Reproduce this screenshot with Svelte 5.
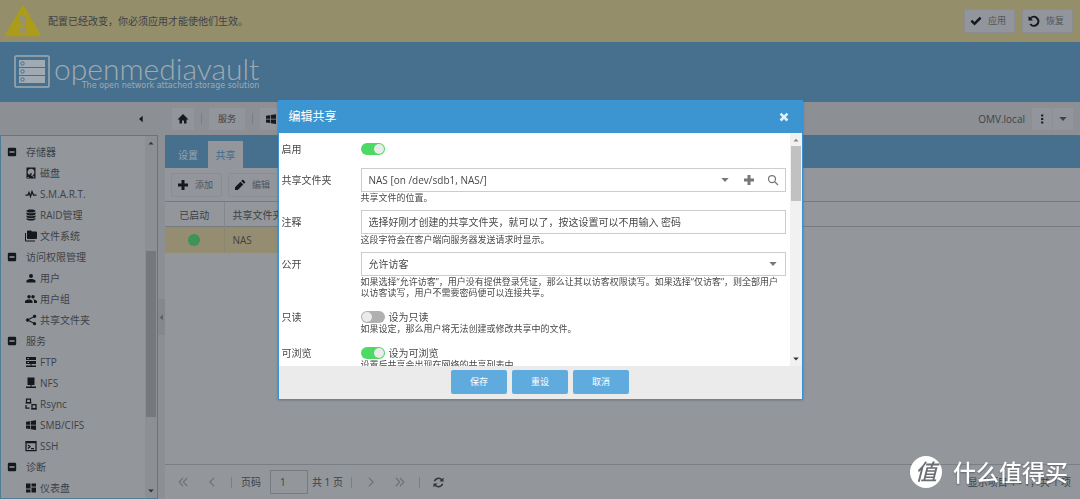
<script>
    let enabled = $state(true);
    let readOnly = $state(false);
    let browseable = $state(true);
    let comment = $state('选择好刚才创建的共享文件夹，就可以了，按这设置可以不用输入 密码');
    let page = $state(1);

    // f = filled shapes, s = stroked lines, all on a 24x24 grid
    const icons = {
        minus: { f: 'M5 2h14a3 3 0 0 1 3 3v14a3 3 0 0 1-3 3H5a3 3 0 0 1-3-3V5a3 3 0 0 1 3-3zM6 10v4h12v-4z' },
        disk: { f: 'M3 1h18v22H3zM12 3.500a7 7 0 0 0-4 12.700l4-4.200 2 1.500-2.500 4A7 7 0 0 0 12 3.500zM5 20v1.500h3V20zM14 17l3 4h2l-3.500-5z' },
        pulse: { s: 'M1 14h5l2-5 3 8 3-10 3 7h6' },
        database: { f: 'M12 1c5.500 0 9 1.300 9 3s-3.500 3-9 3-9-1.300-9-3 3.500-3 9-3zM3 6.500c2 1.500 5 2 9 2s7-.5 9-2V10c0 1.700-3.500 3-9 3s-9-1.300-9-3zM3 12.300c2 1.500 5 2 9 2s7-.5 9-2v3c0 1.700-3.500 3-9 3s-9-1.300-9-3zM3 17.800c2 1.500 5 2 9 2s7-.5 9-2V20c0 1.700-3.500 3-9 3s-9-1.300-9-3z' },
        folders: { f: 'M22 3h-8l-2-2H6a2 2 0 0 0-2 2v13a2 2 0 0 0 2 2h16a2 2 0 0 0 2-2V5a2 2 0 0 0-2-2M2 6H0v15a2 2 0 0 0 2 2h18v-2H2z' },
        user: { f: 'M12 12a4 4 0 1 0 0-8 4 4 0 0 0 0 8zm0 2c-2.700 0-9 1.300-9 4v3h18v-3c0-2.700-6.300-4-9-4z' },
        users: { f: 'M16 11a3.500 3.500 0 1 0 0-7 3.500 3.500 0 0 0 0 7zm-8 0a3.500 3.500 0 1 0 0-7 3.500 3.500 0 0 0 0 7zm0 2c-2.300 0-8 1.200-8 3.500V20h15v-3.500C15 14.200 10.300 13 8 13zm8 0c1.500 1 2 2 2 3.500V20h6v-3.500c0-2.300-5.700-3.500-8-3.500z' },
        share: { f: 'M19 16c-.8 0-1.600.3-2.200.8l-8.300-4.200V11.400L16.800 7.200A3.300 3.300 0 1 0 15.700 5v.5L7.500 9.700a3.300 3.300 0 1 0 0 4.600l8.200 4.200v.5A3.300 3.300 0 1 0 19 16z' },
        ftp: { f: 'M2 2h20v6H2zM2 10h20v6H2zM11 16h2v3h9v3H2v-3h9zM5 4v2h3V4zM5 12v2h3v-2z' },
        nfs: { f: 'M5 1h14v15H5zM11 16h2v3h9v3H2v-3h9z' },
        rsync: { f: 'M1 9h12v2H1zM12 21h12v2H12z', s: 'M3 2h8v7H3zM14 13h8v8h-8zM2 14v6h7' },
        windows: { f: 'M2 5.500l8-1.200v7.200H2zM11.500 4L22 2.500v9H11.500zM2 12.800h8V20l-8-1.200zM11.500 12.800H22v9L11.500 20.300z' },
        ssh: { s: 'M2 3h20v18H2zM2 5h20M6 10l4 3-4 4M12 17h6' },
        dashboard: { f: 'M2 13h9V3H2zM2 21h9v-6H2zM13 21h9V11h-9zM13 3v6h9V3z' },
        home: { f: 'M10 21v-6h4v6h5v-8h4L12 2 1 13h4v8z' },
        plus: { f: 'M9 2h6v7h7v6h-7v7H9v-7H2V9h7z' },
        pencil: { f: 'M2 16.500V22h5.500L18.500 11 13 5.500zM22 7.500c.7-.7.7-1.500 0-2.200L18.700 2c-.7-.7-1.500-.7-2.200 0L14.500 4 20 9.500z' },
        check: { f: 'M1 13l3.500-3.500L9 14 19.500 3.500 23 7 9 21z' },
        undo: { f: 'M1 2v9h9L6.600 7.600A7 7 0 1 1 6 17l-3 2.200A11 11 0 1 0 4 5z' },
        dots: { f: 'M10 1h5v5h-5zM10 9.500h5v5h-5zM10 18h5v5h-5z' },
        caret: { f: 'M1 6h22L12 18z' },
        up: { f: 'M2 18h20L12 7z' },
        left: { f: 'M17 2v20L6 12z' },
        search: { s: 'M10 3a7 7 0 1 0 0 14 7 7 0 0 0 0-14zM15 15L22 22' },
        close: { f: 'M6 1.500l6 6 6-6L22.500 6l-6 6 6 6-4.500 4.500-6-6-6 6L1.500 18l6-6-6-6z' },
        first: { s: 'M12 2L3 12l9 10M22 2l-9 10 9 10' },
        prev: { s: 'M17 2L7 12l10 10' },
        next: { s: 'M7 2l10 10L7 22' },
        last: { s: 'M2 2l9 10-9 10M12 2l9 10-9 10' },
        refresh: { f: 'M23 1v9h-9l3.300-3.300A7.500 7.500 0 0 0 5 9.500H1.500A11 11 0 0 1 19.800 4.200zM1 23v-9h9l-3.300 3.300A7.500 7.500 0 0 0 19 14.500h3.500A11 11 0 0 1 4.200 19.800z' }
    };

    const menu = [
        { title: '存储器', items: [['disk', '磁盘'], ['pulse', 'S.M.A.R.T.'], ['database', 'RAID管理'], ['folders', '文件系统']] },
        { title: '访问权限管理', items: [['user', '用户'], ['users', '用户组'], ['share', '共享文件夹']] },
        { title: '服务', items: [['ftp', 'FTP'], ['nfs', 'NFS'], ['rsync', 'Rsync'], ['windows', 'SMB/CIFS'], ['ssh', 'SSH']] },
        { title: '诊断', items: [['dashboard', '仪表盘']] }
    ];
</script>

{#snippet icon(name)}
    <svg class="icon {name}" viewBox="0 0 24 24" aria-hidden="true">
        {#if icons[name].f}<path d={icons[name].f} fill="currentColor" fill-rule="evenodd" />{/if}
        {#if icons[name].s}<path d={icons[name].s} fill="none" stroke="currentColor" stroke-width="2.500" />{/if}
    </svg>
{/snippet}

<div class="app">
    <div class="notice">
        <svg class="warning" viewBox="0 0 34 32" aria-hidden="true">
            <path d="M17 3L32 29H2z" fill="#ab9c1c" stroke="#ab9c1c" stroke-width="3" stroke-linejoin="round" />
            <path d="M14 11h6l-1 9h-4zM14 22h6v5h-6z" fill="#979274" />
        </svg>
        <span class="message">配置已经改变，你必须应用才能使他们生效。</span>
        <button class="tool">{@render icon('check')}应用</button>
        <button class="tool">{@render icon('undo')}恢复</button>
    </div>

    <header>
        <svg class="logo" viewBox="0 0 36 34" aria-hidden="true">
            <rect x="1" y="1" width="34" height="31" rx="1" fill="none" stroke="#a0aab3" stroke-width="1.500" />
            <path d="M5 5h26v7H5zM5 13h26v7H5zM5 21h26v7H5z" fill="#a0aab3" />
            <g fill="none" stroke="#46708e">
                <circle cx="8.500" cy="8.500" r="1.700" /><circle cx="8.500" cy="16.500" r="1.700" /><circle cx="8.500" cy="24.500" r="1.700" />
                <path d="M5 12.500h26M5 20.500h26" />
            </g>
        </svg>
        <div class="brand">
            <span class="name">openmediavault</span>
            <span class="tagline">The open network attached storage solution</span>
        </div>
    </header>

    <nav class="crumbs">
        <button class="collapse" aria-label="折叠">{@render icon('left')}</button>
        <button class="crumb" aria-label="主页">{@render icon('home')}</button>
        <i></i>
        <button class="crumb text">服务</button>
        <i></i>
        <button class="crumb" aria-label="SMB/CIFS">{@render icon('windows')}</button>
        <span class="host">OMV.local</span>
        <div class="pair">
            <button aria-label="菜单">{@render icon('dots')}</button>
            <button aria-label="更多">{@render icon('caret')}</button>
        </div>
    </nav>

    <div class="body">
        <aside>
            <ul class="tree">
                {#each menu as group}
                    <li>
                        <button class="group">{@render icon('minus')}{group.title}</button>
                        <ul>
                            {#each group.items as [name, label]}
                                <li><a href="#top">{@render icon(name)}{label}</a></li>
                            {/each}
                        </ul>
                    </li>
                {/each}
            </ul>
            <div class="scroll dim">
                {@render icon('up')}
                <div class="track side"><div class="thumb"></div></div>
                {@render icon('caret')}
            </div>
        </aside>
        <div class="splitter"><span>{@render icon('left')}</span></div>

        <main>
            <div class="tabs">
                <button>设置</button>
                <button class="active">共享</button>
            </div>
            <div class="toolbar">
                <button class="tool">{@render icon('plus')}添加</button>
                <button class="tool">{@render icon('pencil')}编辑</button>
            </div>
            <div class="grid">
                <table>
                    <thead>
                        <tr><th class="state">已启动</th><th>共享文件夹</th><th></th></tr>
                    </thead>
                    <tbody>
                        <tr><td class="state"><span class="dot"></span></td><td>NAS</td><td></td></tr>
                    </tbody>
                </table>
            </div>
            <div class="paging">
                <button aria-label="首页">{@render icon('first')}</button>
                <button aria-label="上一页">{@render icon('prev')}</button>
                <i></i>
                <label for="page">页码</label>
                <input id="page" bind:value={page} />
                <span class="count">共 1 页</span>
                <i></i>
                <button aria-label="下一页">{@render icon('next')}</button>
                <button aria-label="末页">{@render icon('last')}</button>
                <i></i>
                <button aria-label="刷新">{@render icon('refresh')}</button>
                <span class="summary">显示项目 1 - 1，共 1 项</span>
            </div>
        </main>
    </div>
</div>

<div class="overlay">
    <div class="window" role="dialog" aria-labelledby="title">
        <div class="title">
            <h1 id="title">编辑共享</h1>
            <button aria-label="关闭">{@render icon('close')}</button>
        </div>
        <div class="content">
            <form>
                <div class="row">
                    <label for="enable">启用</label>
                    <div class="field">
                        <div class="switch"><input id="enable" type="checkbox" bind:checked={enabled} /></div>
                    </div>
                </div>
                <div class="row">
                    <label for="folder">共享文件夹</label>
                    <div class="field">
                        <div class="box">
                            <select id="folder"><option>NAS [on /dev/sdb1, NAS/]</option></select>
                            <span class="trigger">{@render icon('caret')}</span>
                            <button type="button" class="trigger" aria-label="添加">{@render icon('plus')}</button>
                            <button type="button" class="trigger" aria-label="搜索">{@render icon('search')}</button>
                        </div>
                        <p>共享文件的位置。</p>
                    </div>
                </div>
                <div class="row">
                    <label for="comment">注释</label>
                    <div class="field">
                        <div class="box"><input id="comment" type="text" bind:value={comment} /></div>
                        <p>这段字符会在客户端向服务器发送请求时显示。</p>
                    </div>
                </div>
                <div class="row">
                    <label for="public">公开</label>
                    <div class="field">
                        <div class="box">
                            <select id="public"><option>允许访客</option><option>仅访客</option></select>
                            <span class="trigger">{@render icon('caret')}</span>
                        </div>
                        <p>如果选择“允许访客”，用户没有提供登录凭证，那么让其以访客权限读写。如果选择“仅访客”，则全部用户以访客读写，用户不需要密码便可以连接共享。</p>
                    </div>
                </div>
                <div class="row">
                    <label for="readonly">只读</label>
                    <div class="field">
                        <label class="switch"><input id="readonly" type="checkbox" bind:checked={readOnly} />设为只读</label>
                        <p class="tight">如果设定，那么用户将无法创建或修改共享中的文件。</p>
                    </div>
                </div>
                <div class="row">
                    <label for="browse">可浏览</label>
                    <div class="field">
                        <label class="switch"><input id="browse" type="checkbox" bind:checked={browseable} />设为可浏览</label>
                        <p class="tight">设置后共享会出现在网络的共享列表中。</p>
                    </div>
                </div>
            </form>
            <div class="scroll">
                {@render icon('up')}
                <div class="track"><div class="thumb"></div></div>
                {@render icon('caret')}
            </div>
        </div>
        <div class="actions">
            <button>保存</button>
            <button>重设</button>
            <button>取消</button>
        </div>
    </div>
</div>

<div class="watermark"><span class="badge">值</span>什么值得买</div>

<style>
:global(body) {
    font: 10px/20px "Open Sans", "Noto Sans CJK SC", sans-serif;
    color: #3d4147;
    background: #93979c;
}

* {
    box-sizing: border-box;
}

button, input, select {
    font: inherit;
    color: inherit;
    border: 0;
    padding: 0;
    margin: 0;
    background: none;
}

button {
    display: flex;
    align-items: center;
    justify-content: center;
    cursor: pointer;
}

ul {
    list-style: none;
    margin: 0;
    padding: 0;
}

.icon {
    width: 12px;
    height: 12px;
    flex: none;
    color: #15181d;
}

.app {
    height: 100vh;
    display: flex;
    flex-direction: column;
    overflow: hidden;
}

.notice {
    height: 42px;
    flex: none;
    display: flex;
    align-items: center;
    gap: 7px;
    padding: 0 7px 0 5px;
    background: #958e6a;
}

.warning {
    width: 36px;
    height: 34px;
}

.message {
    flex: 1;
}

.tool {
    height: 24px;
    gap: 6px;
    padding: 0 8px 0 5px;
    font-size: 9px;
    color: #505459;
    background: #92959b;
    border: 1px solid #8a8e93;
    border-radius: 2px;
}

header {
    height: 60px;
    flex: none;
    display: flex;
    align-items: center;
    gap: 4px;
    padding-left: 14px;
    background: #46708e;
    color: #a0aab3;
}

.logo {
    width: 36px;
    height: 34px;
}

.brand {
    display: flex;
    flex-direction: column;
    align-items: flex-end;
}

.name {
    font: 300 30px/27px Lato, sans-serif;
}

.tagline {
    font: 8px/8px "DejaVu Sans", sans-serif;
}

.crumbs {
    height: 33px;
    flex: none;
    display: flex;
    align-items: center;
    gap: 7px;
    padding: 0 7px 0 135px;
    background: #8c8f94;
}

.collapse {
    width: 12px;
    margin-right: 18px;
}

.collapse .icon {
    width: 8px;
    height: 8px;
}

.crumb {
    height: 22px;
    padding: 0 5px;
    background: #92959b;
}

.text {
    padding: 0 9px;
    font-size: 9px;
}

i {
    width: 1px;
    height: 11px;
    background: #7b7f84;
}

.host {
    margin-left: auto;
    color: #3f4348;
}

.pair {
    display: flex;
    gap: 1px;
}

.pair button {
    width: 20px;
    height: 22px;
    background: #92959b;
}

.pair .icon {
    width: 10px;
    height: 10px;
}

.pair .caret {
    width: 8px;
    color: #3f4348;
}

.body {
    flex: 1;
    min-height: 0;
    display: flex;
}

aside {
    width: 158px;
    flex: none;
    display: flex;
    border: 1px solid #4d7e98;
    overflow: hidden;
}

.tree {
    flex: 1;
    padding: 5px 0 0 6px;
}

.tree a, .group {
    display: flex;
    align-items: center;
    justify-content: flex-start;
    height: 21px;
    color: inherit;
    text-decoration: none;
}

.tree a {
    padding-left: 18px;
    gap: 3px;
}

.group {
    gap: 9px;
}

.group .icon {
    width: 10px;
    height: 10px;
}

.scroll {
    width: 12px;
    flex: none;
    display: flex;
    flex-direction: column;
    align-items: center;
    padding: 3px 0;
    gap: 2px;
    background: #f1f1f1;
}

.scroll .icon {
    width: 6px;
    height: 8px;
    color: #333;
}

.scroll .up {
    color: #888;
}

.track {
    flex: 1;
    width: 10px;
}

.thumb {
    height: 27%;
    background: #c1c1c1;
}

.dim {
    background: #8c8f94;
}

.dim .up {
    color: #33373c;
}

.side {
    padding-top: 102px;
}

.side .thumb {
    height: 166px;
    background: #75787d;
}

.splitter {
    width: 7px;
    flex: none;
    display: flex;
    align-items: center;
    background: #8c8f94;
}

.splitter span {
    width: 7px;
    height: 36px;
    display: flex;
    align-items: center;
    background: #85888d;
}

.splitter .icon {
    width: 7px;
    height: 7px;
    color: #5d6166;
}

main {
    flex: 1;
    min-width: 0;
    display: flex;
    flex-direction: column;
}

.tabs {
    height: 33px;
    flex: none;
    display: flex;
    align-items: flex-end;
    gap: 1px;
    padding-left: 4px;
    background: #46708e;
}

.tabs button {
    height: 27px;
    padding: 0 7px;
    min-width: 35px;
    color: #9aa3ab;
}

.tabs button:first-child {
    min-width: 38px;
}

.tabs .active {
    color: #3e6c8c;
    background: #93979c;
}

.toolbar {
    height: 33px;
    flex: none;
    display: flex;
    align-items: center;
    gap: 6px;
    padding-left: 6px;
}

.grid {
    flex: 1;
    border-top: 1px solid #777b80;
    background: linear-gradient(#777b80, #777b80) 0 24px / 100% 1px no-repeat;
}

table {
    width: 600px;
    border-collapse: collapse;
    table-layout: fixed;
}

th, td {
    height: 25px;
    padding: 0 8px;
    font-weight: normal;
    text-align: left;
    border-right: 1px solid #84888d;
}

td {
    height: 26px;
    background: #958d72;
    border-color: #8c8770;
}

th:nth-child(2) {
    width: 120px;
}

th.state {
    width: 59px;
}

.state {
    text-align: center;
}

.dot {
    display: block;
    width: 12px;
    height: 12px;
    margin: 0 auto;
    border-radius: 50%;
    background: #3f9359;
}

.paging {
    height: 35px;
    flex: none;
    display: flex;
    align-items: center;
    gap: 9px;
    padding: 0 9px 0 8px;
    border-top: 1px solid #7b7f84;
}

.paging button {
    width: 20px;
    height: 20px;
}

.paging .icon {
    width: 10px;
    height: 10px;
    color: #666a6f;
}

.paging .refresh {
    width: 11px;
    height: 11px;
    color: #33373c;
}

.paging input {
    width: 38px;
    height: 24px;
    padding-left: 9px;
    border: 1px solid #777b80;
}

.count {
    margin: 0 -1px 0 -5px;
}

.summary {
    margin-left: auto;
}

.overlay {
    position: fixed;
    inset: 0;
    display: flex;
    align-items: center;
    justify-content: center;
}

.window {
    width: 525px;
    max-width: 100%;
    display: flex;
    flex-direction: column;
    color: #484848;
    background: #fff;
    border: 1px solid #3892d3;
    box-shadow: 0 0 2px #5d6a75;
}

.title {
    height: 32px;
    display: flex;
    align-items: center;
    justify-content: space-between;
    padding: 0 13px 0 10px;
    background: #3c95d0;
    color: #fff;
}

h1 {
    margin: 0;
    font-size: 12px;
    font-weight: normal;
}

.title .icon {
    width: 10px;
    height: 10px;
    color: #e2eff8;
}

.content {
    height: 233px;
    display: flex;
    overflow: hidden;
}

form {
    flex: 1;
    min-width: 0;
    display: flex;
    flex-direction: column;
    gap: 7px;
    padding: 4px 4px 0 3px;
}

.row {
    display: flex;
}

.row > label {
    width: 79px;
    flex: none;
    line-height: 24px;
}

.field {
    flex: 1;
    min-width: 0;
}

.box {
    height: 24px;
    display: flex;
    border: 1px solid #ccc;
}

.box input, .box select {
    flex: 1;
    min-width: 0;
    padding: 0 7px;
    appearance: none;
    outline: none;
}

.trigger {
    width: 24px;
    display: flex;
    align-items: center;
    justify-content: center;
}

.trigger .icon {
    width: 12px;
    height: 12px;
    color: #777;
}

.trigger .caret {
    width: 8px;
    height: 8px;
}

p {
    margin: 0;
    font-size: 9px;
    line-height: 11px;
}

.tight {
    margin-top: -6px;
}

.switch {
    display: flex;
    align-items: center;
    gap: 4px;
    height: 24px;
}

.switch input {
    width: 24px;
    height: 12px;
    appearance: none;
    display: flex;
    border-radius: 6px;
    background: #b0b0b0;
}

.switch input::before {
    content: "";
    width: 10px;
    height: 10px;
    margin: 1px;
    border-radius: 50%;
    background: #ebebeb;
}

.switch input:checked {
    justify-content: flex-end;
    background: #4cd964;
}

.actions {
    height: 33px;
    display: flex;
    align-items: center;
    justify-content: center;
    gap: 5px;
    background: #ebebeb;
}

.actions button {
    width: 56px;
    height: 24px;
    font-size: 9px;
    color: #fff;
    background: #5fabde;
    border-radius: 2px;
}

.watermark {
    position: fixed;
    right: 12px;
    bottom: 11px;
    display: flex;
    align-items: center;
    gap: 11px;
    color: #fff;
    font-size: 23px;
    font-weight: 500;
    line-height: 32px;
    text-shadow: 0 1px 2px #5d6166;
}

.badge {
    width: 32px;
    height: 32px;
    border-radius: 50%;
    text-align: center;
    font-size: 22px;
    line-height: 30px;
    font-style: italic;
    color: #6a6e73;
    text-shadow: none;
    background: #fff;
}
</style>
